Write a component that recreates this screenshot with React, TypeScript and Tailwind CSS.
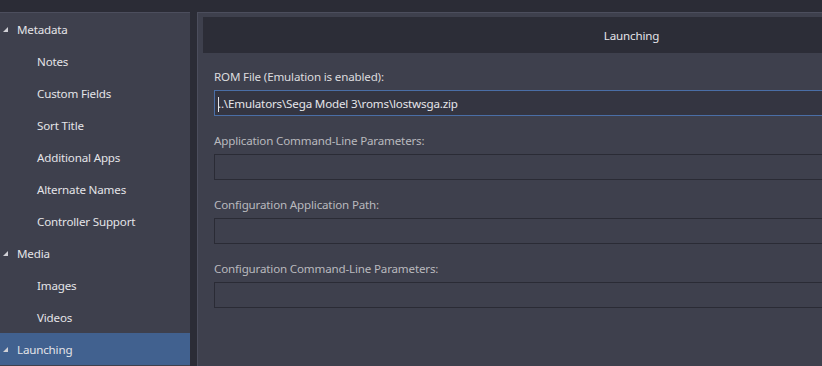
import React from "react";

const Tri = () => (
  <svg width="5" height="5" viewBox="0 0 5 5" className="absolute left-[3px] top-[14px]">
    <polygon points="5,0 5,5 0,5" fill="#d0d0d6" />
  </svg>
);

const items: { label: string; level: number; selected?: boolean }[] = [
  { label: "Metadata", level: 0 },
  { label: "Notes", level: 1 },
  { label: "Custom Fields", level: 1 },
  { label: "Sort Title", level: 1 },
  { label: "Additional Apps", level: 1 },
  { label: "Alternate Names", level: 1 },
  { label: "Controller Support", level: 1 },
  { label: "Media", level: 0 },
  { label: "Images", level: 1 },
  { label: "Videos", level: 1 },
  { label: "Launching", level: 0, selected: true },
];

const fields = [
  "Application Command-Line Parameters:",
  "Configuration Application Path:",
  "Configuration Command-Line Parameters:",
];

export default function App() {
  return (
    <div
      className="w-[822px] h-[366px] overflow-hidden bg-[#2b2c36] flex flex-col text-[11.6px] tracking-[-0.17px]"
      style={{ fontFamily: '"Noto Sans", "Open Sans", sans-serif' }}
    >
      <div className="h-[12px] shrink-0 bg-[#2b2c36]" />
      <div className="flex flex-1 min-h-0">
        <div className="w-[190px] shrink-0 bg-[#3e404d] border-t border-[#4c4e5d] flex flex-col">
          {items.map((it) => (
            <div
              key={it.label}
              className={`relative h-[32px] shrink-0 flex items-center pt-[2px] text-[#e4e4e8] ${
                it.selected ? "bg-[#41618f]" : ""
              } ${it.level === 0 ? "pl-[17px]" : "pl-[37px]"}`}
            >
              {it.level === 0 && <Tri />}
              <span className="leading-[16px]">{it.label}</span>
            </div>
          ))}
        </div>
        <div className="w-[7px] shrink-0" />
        <div className="w-[868px] shrink-0 bg-[#3e404d] border-t border-l border-[#4c4e5d] pl-[5px] pr-[5px] pt-[4px]">
          <div className="h-[36px] bg-[#2c2d37] flex items-center justify-center pt-[2px] text-[#e4e4e8]">
            Launching
          </div>
          <div className="pl-[11px] pr-[11px] pt-[16px]">
            <div className="h-[16px] leading-[16px] mb-[5px] text-[#dcdcdf]">ROM File (Emulation is enabled):</div>
            <div className="h-[26px] border border-[#4a6ea6] bg-[#343541] flex items-center pl-[3px] pt-[2px] text-[#e6e6ea]">
              <span className="inline-block w-px h-[15px] bg-[#e6e6ea] mr-[-1px]" />
              <span className="leading-[16px]">..\Emulators\Sega Model 3\roms\lostwsga.zip</span>
            </div>
            {fields.map((f) => (
              <div key={f} className="mt-[17px]">
                <div className="h-[16px] leading-[16px] mb-[5px] text-[#b9b9be]">{f}</div>
                <div className="h-[26px] border border-[#2a2b35] bg-[#3e404d]" />
              </div>
            ))}
          </div>
        </div>
      </div>
    </div>
  );
}
